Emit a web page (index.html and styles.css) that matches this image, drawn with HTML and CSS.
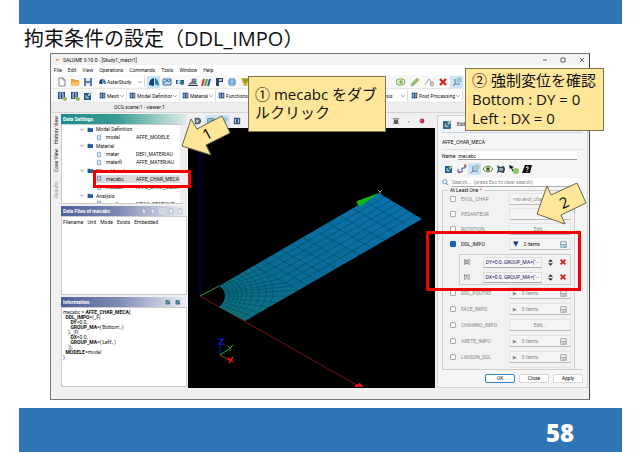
FILE: index.html
```html
<!DOCTYPE html>
<html lang="ja">
<head>
    <meta charset="UTF-8">
    <meta name="viewport" content="width=device-width, initial-scale=1">
    <title>拘束条件の設定（DDL_IMPO）</title>
    <link rel="stylesheet" href="styles.css">
</head>
<body>
    <!-- shared icons -->
    <svg class="defs" width="0" height="0" aria-hidden="true">
        <symbol id="i-new" viewBox="0 0 10 10"><path d="M2 1h4l2 2v6H2z" fill="#fff" stroke="#789"/><path d="M6 1v2h2" fill="none" stroke="#789"/></symbol>
        <symbol id="i-open" viewBox="0 0 10 10"><path d="M1 8V2h3l1 1h4v5z" fill="#e8a33d"/><path d="M1 9l1-4h8l-1 4z" fill="#f4c566"/></symbol>
        <symbol id="i-save" viewBox="0 0 10 10"><path d="M1 1h8v8H1z" fill="#587ca5"/><path d="M3 1h4v3H3zM3 6h4v3H3z" fill="#e4edf5"/></symbol>
        <symbol id="i-aster" viewBox="0 0 10 10"><path d="M0 8Q0 2 5 1v8z" fill="#123f75"/><path d="M6 1q4 2 4 8L6 7z" fill="#2879b8"/></symbol>
        <symbol id="i-geom" viewBox="0 0 10 10"><path d="M1 2h8v6H1z" fill="#c7dcea" stroke="#37739a"/><path d="M2 6l3-3 1 2 3-2" stroke="#1a6c94" fill="none"/></symbol>
        <symbol id="i-cam" viewBox="0 0 10 10"><path d="M1 3h8v4H1z" fill="#245a83"/><circle cx="4" cy="5" r="2" fill="#bdd6e4"/><circle cx="7" cy="6" r="2" fill="#3d7295"/></symbol>
        <symbol id="i-mesh" viewBox="0 0 10 10"><path d="M1 7l2-2h4l2 2zM4 2h4v3H4z" fill="#8698a6" stroke="#4a5967" stroke-width=".6"/><path d="M0 8.500h10" stroke="#27353f"/></symbol>
        <symbol id="i-para" viewBox="0 0 10 10"><path d="M1 9l2-7" stroke="#d5372f" stroke-width="2"/><path d="M4 9l2-7" stroke="#49a447" stroke-width="2"/><path d="M7 9l2-7" stroke="#3054a5" stroke-width="2"/></symbol>
        <symbol id="i-flag" viewBox="0 0 10 10"><path d="M1 1h8v4H5v4H2V1z" fill="#34465b"/><path d="M5 2h3v2H5z" fill="#b9c4d0"/></symbol>
        <symbol id="i-globe" viewBox="0 0 10 10"><circle cx="5" cy="5" r="4" fill="#4b94d1"/><path d="M5 1v8M1 5h8M2 3h6M2 7h6" stroke="#dcedf8" stroke-width=".6"/></symbol>
        <symbol id="i-yacs" viewBox="0 0 10 10"><path d="M1 1h8L7 9H4z" fill="#d5b830"/><path d="M3 3h5M4 5h3" stroke="#5f752f"/></symbol>
        <symbol id="i-cmd" viewBox="0 0 10 10"><path d="M1 1h8v8H1z" fill="#244f86"/><path d="M4 3H3v4h1M6 3h1v4H6" stroke="#fff" fill="none"/></symbol>
        <symbol id="i-cmdplus" viewBox="0 0 10 10"><path d="M1 1h7v7H1z" fill="#244f86"/><path d="M4 2H3v5h1M5 2h1v5H5" stroke="#fff" fill="none" stroke-width=".8"/><circle cx="8" cy="8" r="2" fill="#91bc55"/></symbol>
        <symbol id="i-edit" viewBox="0 0 10 10"><path d="M1 2h7v7H1z" fill="#225b8e"/><path d="M3 4v3h3M5 4l3-3 1 1-3 3z" stroke="#cfe0ed" stroke-width=".7" fill="#8ab65d"/></symbol>
        <symbol id="i-eye" viewBox="0 0 10 10"><path d="M0 5q5-6 10 0-5 6-10 0z" fill="#fff" stroke="#5a783d"/><circle cx="5" cy="5" r="2" fill="#66903b"/><circle cx="5" cy="5" r="1" fill="#243414"/></symbol>
        <symbol id="i-axes" viewBox="0 0 10 10"><path d="M3 2v5h5" fill="none" stroke="#347fb0"/><path d="M3 7L1 9" stroke="#d33"/><circle cx="7" cy="3" r="2" fill="#b9d3d9" stroke="#698" stroke-width=".6"/></symbol>
        <symbol id="i-pt" viewBox="0 0 10 10"><path d="M1 5v3h4M5 8V4h3V1" fill="none" stroke="#284f81"/><path d="M1 8l2 1M7 1h2v2" stroke="#d33" fill="none"/></symbol>
        <symbol id="i-grp" viewBox="0 0 10 10"><path d="M1 1l3 2 4-1 1 3-1 4-5-1-2 1 1-4z" fill="#2d4557"/><path d="M3 4h4v3H3z" fill="#8fa6b5"/></symbol>
        <symbol id="i-pick" viewBox="0 0 10 10"><path d="M0 1l5 2-2 1 2 3-1 1-2-4-1 1z" fill="#111"/><circle cx="7" cy="7" r="3" fill="#8cc860"/></symbol>
        <symbol id="i-help" viewBox="0 0 10 10"><path d="M3 1h7L8 9H0z" fill="#111"/><path d="M4 4q1-2 2-1t-1 3M5 7v1" stroke="#fff" fill="none"/></symbol>
        <symbol id="i-plus" viewBox="0 0 10 10"><rect x="0" y="2" width="9" height="6" rx="3" fill="#dcebc8" stroke="#83ad55"/><path d="M5 3v4M3 5h4" stroke="#739b46"/></symbol>
        <symbol id="i-pen" viewBox="0 0 10 10"><path d="M1 9l1-3 5-5 2 2-5 5z" fill="#9bc075" stroke="#779b55" stroke-width=".6"/></symbol>
        <symbol id="i-link" viewBox="0 0 10 10"><path d="M1 8l4-6 3 4" fill="none" stroke="#999"/><circle cx="8" cy="7" r="2" fill="#ccc" stroke="#888" stroke-width=".6"/></symbol>
        <symbol id="i-x" viewBox="0 0 10 10"><path d="M2 2l6 6M8 2L2 8" stroke="#df2020" stroke-width="2.4"/></symbol>
        <symbol id="i-folder" viewBox="0 0 10 10"><path d="M1 8V2h3l1 1h5v6H1z" fill="#245c9a"/></symbol>
        <symbol id="i-brace" viewBox="0 0 10 10"><path d="M4 1H3v3L2 5l1 1v3h1M6 1h1v3l1 1-1 1v3H6" fill="none" stroke="#2864a4" stroke-width="1.3"/></symbol>
        <symbol id="i-down" viewBox="0 0 10 10"><path d="M1 3l4 4 4-4" fill="none" stroke="#555" stroke-width="1.6"/></symbol>
        <symbol id="i-disk" viewBox="0 0 10 10"><path d="M1 1h8v8H1zM1 5h8M3 7h4v2" fill="none" stroke="currentColor"/></symbol>
        <symbol id="i-bug" viewBox="0 0 10 10"><circle cx="5" cy="6" r="3" fill="#556"/><path d="M1 2l8 7M9 2L1 9M2 2h6" stroke="#665" /></symbol>
        <symbol id="i-view" viewBox="0 0 10 10"><path d="M1 1h5q3 1 3 4T6 9H1z" fill="#555d67"/><path d="M3 3h2q2 2 0 4H3z" fill="#dde"/></symbol>
    </svg>

    <div class="slide">
        <div class="top-bar"></div>
        <h1>拘束条件の設定（DDL_IMPO）</h1>

        <div class="stage">
            <div class="window">
                <div class="titlebar">
                    <svg class="ic" viewBox="0 0 10 10"><path d="M1 3l4 2 4-2-3 5-1-2-2 2z" fill="#c88b60"/></svg>
                    <span>SALOME 9.10.0 - [Study1_mesh1]</span>
                    <span class="win-buttons">
                        <svg viewBox="0 0 50 10"><path d="M4 5h4M22 3h4v4h-4zM41 3l4 4M45 3l-4 4" fill="none" stroke="#444" stroke-width=".8"/></svg>
                    </span>
                </div>
                <div class="menubar">
                    <span>File</span><span>Edit</span><span>View</span><span>Operations</span><span>Commands</span><span>Tools</span><span>Window</span><span>Help</span>
                </div>

                <div class="toolbar">
                    <button class="tool" aria-label="New"><svg><use href="#i-new"/></svg></button>
                    <button class="tool" aria-label="Open"><svg><use href="#i-open"/></svg></button>
                    <button class="tool" aria-label="Save"><svg><use href="#i-save"/></svg></button>
                    <span class="combo module"><svg><use href="#i-aster"/></svg><select aria-label="Module"><option>AsterStudy</option></select><svg class="chev"><use href="#i-down"/></svg></span>
                    <button class="tool on" aria-label="AsterStudy"><svg><use href="#i-aster"/></svg></button>
                    <button class="tool" aria-label="Geometry"><svg><use href="#i-geom"/></svg></button>
                    <button class="tool" aria-label="Fields"><svg><use href="#i-cam"/></svg></button>
                    <button class="tool" aria-label="Mesh"><svg><use href="#i-mesh"/></svg></button>
                    <button class="tool" aria-label="ParaViS"><svg><use href="#i-para"/></svg></button>
                    <button class="tool" aria-label="Jobs"><svg><use href="#i-flag"/></svg></button>
                    <button class="tool" aria-label="Shaper"><svg><use href="#i-globe"/></svg></button>
                    <button class="tool" aria-label="YACS"><svg><use href="#i-yacs"/></svg></button>
                    <div class="tools-right">
                        <button class="tool" aria-label="Add"><svg><use href="#i-plus"/></svg></button>
                        <button class="tool" aria-label="Edit"><svg><use href="#i-pen"/></svg></button>
                        <button class="tool" aria-label="Link"><svg><use href="#i-link"/></svg></button>
                        <button class="tool" aria-label="Delete"><svg><use href="#i-x"/></svg></button>
                        <button class="tool on" aria-label="Axes"><svg><use href="#i-axes"/></svg></button>
                    </div>
                </div>

                <div class="toolbar commands">
                    <button class="tool" aria-label="Add stage"><svg><use href="#i-cmdplus"/></svg></button>
                    <button class="tool" aria-label="Import stage"><svg><use href="#i-cmdplus"/></svg></button>
                    <button class="tool" aria-label="Edit stage"><svg><use href="#i-edit"/></svg></button>
                    <span class="combo w-mesh"><svg><use href="#i-cmd"/></svg><select aria-label="Mesh"><option>Mesh</option></select><svg class="chev"><use href="#i-down"/></svg></span>
                    <span class="combo w-model"><svg><use href="#i-cmd"/></svg><select aria-label="Model Definition"><option>Model Definition</option></select><svg class="chev"><use href="#i-down"/></svg></span>
                    <span class="combo w-mat"><svg><use href="#i-cmd"/></svg><select aria-label="Material"><option>Material</option></select><svg class="chev"><use href="#i-down"/></svg></span>
                    <span class="combo w-mat"><svg><use href="#i-cmd"/></svg><select aria-label="Functions"><option>Functions</option></select></span>
                    <div class="tools-right">
                        <span class="combo w-mat"><select aria-label="Analysis"><option>Analysis</option></select><svg class="chev"><use href="#i-down"/></svg></span>
                        <span class="combo w-post"><svg><use href="#i-cmd"/></svg><select aria-label="Post Processing"><option>Post Processing</option></select><svg class="chev"><use href="#i-down"/></svg></span>
                    </div>
                </div>

                <div class="doc-tabs"><span>OCG scene:1 - viewer:1</span></div>

                <div class="main">
                    <div class="side-tabs"><span>History View</span><span>Case View</span><span class="off">Results</span></div>

                    <div class="left">
                        <section class="panel">
                            <h2 class="green">Data Settings</h2>
                            <div class="tree">
                                <ul>
                                    <li class="folder"><svg><use href="#i-down"/></svg><svg><use href="#i-folder"/></svg>Model Definition</li>
                                    <li><svg><use href="#i-brace"/></svg><span>model</span>AFFE_MODELE</li>
                                    <li class="folder"><svg><use href="#i-down"/></svg><svg><use href="#i-folder"/></svg>Material</li>
                                    <li><svg><use href="#i-brace"/></svg><span>mater</span>DEFI_MATERIAU</li>
                                    <li><svg><use href="#i-brace"/></svg><span>materfl</span>AFFE_MATERIAU</li>
                                    <li class="folder"><svg><use href="#i-down"/></svg><svg><use href="#i-folder"/></svg>BC and Load</li>
                                    <li class="selected"><svg><use href="#i-brace"/></svg><span>mecabc</span>AFFE_CHAR_MECA</li>
                                    <li><svg><use href="#i-brace"/></svg><span>mecach</span>AFFE_CHAR_MECA</li>
                                    <li class="folder"><svg><use href="#i-down"/></svg><svg><use href="#i-folder"/></svg>Analysis</li>
                                    <li><svg><use href="#i-brace"/></svg><span>result</span>MECA_STATIQUE</li>
                                </ul>
                            </div>
                        </section>
                        <section class="panel">
                            <h2>Data Files of mecabc
                                <span class="head-icons faded"><svg><use href="#i-new"/></svg><svg><use href="#i-new"/></svg><svg><use href="#i-disk"/></svg><svg><use href="#i-new"/></svg><svg><use href="#i-new"/></svg></span>
                            </h2>
                            <div class="files">
                                <table>
                                    <tr><th>Filename</th><th>Unit</th><th>Mode</th><th>Exists</th><th>Embedded</th></tr>
                                </table>
                            </div>
                        </section>
                        <section class="panel">
                            <h2>Information
                                <span class="head-icons wide"><svg><use href="#i-edit"/></svg><svg><use href="#i-edit"/></svg></span>
                            </h2>
<pre class="info"><i>mecabc</i> = <b>AFFE_CHAR_MECA(</b>
  <b>DDL_IMPO</b>=(_F(
      <b>DY</b>=0.0,
      <b>GROUP_MA</b>=('Bottom', )
    ), _F(
      <b>DX</b>=0.0,
      <b>GROUP_MA</b>=('Left', )
    )),
  <b>MODELE</b>=<i>model</i>
)</pre>
                        </section>
                    </div>

                    <div class="viewer">
                        <div class="view-tools">
                            <svg><use href="#i-view"/></svg>
                            <svg class="lit"><use href="#i-geom"/></svg>
                            <svg class="lit"><use href="#i-axes"/></svg>
                            <svg><use href="#i-cmd"/></svg>
                            <div class="view-right">
                                <svg><use href="#i-bug"/></svg>
                                <svg viewBox="0 0 10 10"><circle cx="5" cy="6" r="1" fill="#888"/></svg>
                                <svg viewBox="0 0 10 10"><circle cx="5" cy="5" r="3" fill="#b33048"/><circle cx="4" cy="4" r="1" fill="#e79aa8"/></svg>
                            </div>
                        </div>
                        <svg class="scene" viewBox="0 0 247 259" preserveAspectRatio="xMidYMid meet">
                            <defs>
                                <linearGradient id="plate" x1="0" y1="1" x2="1" y2="0">
                                    <stop offset="0" stop-color="#0c7478"/><stop offset=".35" stop-color="#0a6c96"/><stop offset="1" stop-color="#0870ae"/>
                                </linearGradient>
                                <clipPath id="outline"><path d="M31 158L191 65 234 91 57 193 31 179C39 173 39 162 31 158z"/></clipPath>
                            </defs>
                            <path d="M12 0v168" stroke="#050580"/>
                            <path d="M12 168l160 91" stroke="#9c1414" stroke-width=".8"/>
                            <path d="M12 168l19-10" stroke="#2b9a32"/>
                            <path d="M31 158L191 65 234 91 57 193 31 179C39 173 39 162 31 158z" fill="url(#plate)"/>
                            <g clip-path="url(#outline)">
                                <g transform="matrix(45 25 179 -103 12 168)" class="mesh">
                                    <path d="M.14 .3V1M.28 .3V1M.42 .3V1M.56 .3V1M.7 .3V1M.84 .3V1"/>
                                    <path d="M0 .3H1M0 .35H1M0 .4H1M0 .45H1M0 .51H1M0 .57H1M0 .64H1M0 .71H1M0 .78H1M0 .85H1M0 .92H1"/>
                                    <path d="M0 0L0 .3M0 0L.14 .3M0 0L.28 .3M0 0L.42 .3M0 0L.56 .3M0 0L.7 .3M0 0L.84 .3M0 0L1 .3M0 0L1 .24M0 0L1 .18M0 0L1 .13M0 0L1 .08M0 0L1 .04"/>
                                    <ellipse rx=".47" ry=".12"/><ellipse rx=".53" ry=".135"/><ellipse rx=".59" ry=".15"/><ellipse rx=".65" ry=".17"/><ellipse rx=".72" ry=".19"/><ellipse rx=".8" ry=".215"/><ellipse rx=".9" ry=".24"/><ellipse rx="1" ry=".27"/><ellipse rx="1.1" ry=".3"/>
                                </g>
                            </g>
                            <path d="M191 65l-22 8q-1 4 4 5z" fill="#12b516"/>
                            <path d="M190 62l2 2 2-2M192 64v2" stroke="#7b9b7b" fill="none"/>
                            <path d="M172 255l-5 2v2h9z" fill="#d81818"/>
                            <path d="M32 227v-11" stroke="#1414c8"/><path d="M30 211h5l-4 5h5" stroke="#1414c8" stroke-width="1.4" fill="none"/>
                            <path d="M32 227l9-6" stroke="#2fae3b"/><path d="M40 218l2 2 3-3M42 220v3" stroke="#2fae3b" fill="none"/>
                            <path d="M32 227l9 5" stroke="#c22"/><path d="M40 230l5 4M45 229l-4 6" stroke="#e21a1a" stroke-width="1.6"/>
                        </svg>
                    </div>

                    <div class="right">
                        <div class="edit-head"><svg><use href="#i-edit"/></svg>Edit command</div>
                        <div class="cmd-name">AFFE_CHAR_MECA</div>
                        <div class="name-row"><label for="name">Name</label><input id="name" type="text" value="mecabc"></div>
                        <div class="edit-tools">
                            <button class="tool" aria-label="Edit"><svg><use href="#i-edit"/></svg></button>
                            <button class="tool" aria-label="Points"><svg><use href="#i-pt"/></svg></button>
                            <button class="tool on" aria-label="Axes"><svg><use href="#i-axes"/></svg></button>
                            <button class="tool" aria-label="Show"><svg><use href="#i-eye"/></svg></button>
                            <button class="tool" aria-label="Groups"><svg><use href="#i-grp"/></svg></button>
                            <button class="tool" aria-label="Pick"><svg><use href="#i-pick"/></svg></button>
                            <button class="tool" aria-label="Help"><svg><use href="#i-help"/></svg></button>
                        </div>
                        <div class="search-row">
                            <svg viewBox="0 0 10 10"><circle cx="4" cy="4" r="3" fill="none" stroke="#3182c4"/><path d="M6 6l3 3" stroke="#3182c4" stroke-width="1.4"/></svg>
                            <input type="text" aria-label="Search" placeholder="Search...  (press Esc to clear search)">
                        </div>
                        <div class="group-wrap">
                            <fieldset class="group">
                                <legend>At Least One <em>*</em></legend>
                                <div class="rows">
                                    <div class="row"><input type="checkbox" id="k1"><label for="k1">EVOL_CHAR</label><select class="field" aria-label="EVOL_CHAR value"><option>&lt;no evol_char&gt;</option></select></div>
                                    <div class="row"><input type="checkbox" id="k2"><label for="k2">PESANTEUR</label><button class="field edit" aria-label="PESANTEUR value"></button></div>
                                    <div class="row"><input type="checkbox" id="k3"><label for="k3">ROTATION</label><button class="field edit">Edit...</button></div>
                                    <div class="row active"><input type="checkbox" id="k4" checked><label for="k4">DDL_IMPO</label><button class="field"><b>▼</b>2 items<svg><use href="#i-disk"/></svg></button></div>
                                </div>
                                <div class="items">
                                    <div class="item"><span>[0]</span><button>DY=0.0, GROUP_MA=('···</button><svg class="updown" viewBox="0 0 6 10"><path d="M0 4l3-3 3 3zM0 6l3 3 3-3z" fill="#333"/></svg><svg><use href="#i-x"/></svg></div>
                                    <div class="item"><span>[1]</span><button>DX=0.0, GROUP_MA=('···</button><svg class="updown" viewBox="0 0 6 10"><path d="M0 4l3-3 3 3zM0 6l3 3 3-3z" fill="#333"/></svg><svg><use href="#i-x"/></svg></div>
                                </div>
                                <div class="rows loose">
                                    <div class="row"><input type="checkbox" id="k5"><label for="k5">DDL_POUTRE</label><button class="field"><b>▶</b>0 items<svg><use href="#i-disk"/></svg></button></div>
                                    <div class="row"><input type="checkbox" id="k6"><label for="k6">FACE_IMPO</label><button class="field"><b>▶</b>0 items<svg><use href="#i-disk"/></svg></button></div>
                                    <div class="row"><input type="checkbox" id="k7"><label for="k7">CHAMNO_IMPO</label><button class="field edit">Edit...</button></div>
                                    <div class="row"><input type="checkbox" id="k8"><label for="k8">ARETE_IMPO</label><button class="field"><b>▶</b>0 items<svg><use href="#i-disk"/></svg></button></div>
                                    <div class="row"><input type="checkbox" id="k9"><label for="k9">LIAISON_DDL</label><button class="field"><b>▶</b>0 items<svg><use href="#i-disk"/></svg></button></div>
                                    <div class="row"><input type="checkbox" id="k10"><label for="k10">LIAISON_OBLIQUE</label><button class="field"><b>▶</b>0 items<svg><use href="#i-disk"/></svg></button></div>
                                </div>
                            </fieldset>
                        </div>
                        <div class="dialog-buttons"><button class="ok">OK</button><button>Close</button><button>Apply</button></div>
                    </div>
                </div>
                <div class="statusbar"></div>
            </div>

            <!-- annotations over the window -->
            <div class="mark mark-tree"></div>
            <div class="mark mark-ddl"></div>
            <svg class="arrow arrow-1" viewBox="0 0 52 46"><path d="M2 34L11 7l6 10L42 4l8 17-24 12 5 10z"/><text x="23" y="27" transform="rotate(-28 28 22)">1</text></svg>
            <svg class="arrow arrow-2" viewBox="0 0 54 46"><path d="M2 32L12 4l4 9L42 1l9 20-25 12 4 9z"/><text x="25" y="26" transform="rotate(-25 29 21)">2</text></svg>
            <div class="note note-1">① mecabc をダブルクリック</div>
            <div class="note note-2">② 強制変位を確認<br>Bottom : DY = 0<br>Left : DX = 0</div>
        </div>

        <div class="footer">58</div>
    </div>
</body>
</html>
```
FILE: styles.css
```css
* {
    box-sizing: border-box;
}
body {
    margin: 0;
    background: #fff;
    font-family: "Open Sans", "Noto Sans CJK JP", sans-serif;
    color: #111;
}
button, input, select {
    font: inherit;
    color: inherit;
    margin: 0;
    padding: 0;
    border: 0;
    background: none;
    min-width: 0;
}
svg {
    display: block;
    flex: none;
}
.defs {
    position: absolute;
}

/* slide */
.slide {
    margin: 0 18px 0 19px;
}
.top-bar {
    height: 24px;
    background: #2e75b6;
}
h1 {
    margin: 0 5px;
    font-size: 20px;
    font-weight: 400;
    line-height: 29px;
    white-space: nowrap;
}
.stage {
    position: relative;
    margin: 0 32px 8px 31px;
}
.footer {
    height: 45px;
    padding: 4px 48px 0 0;
    background: #2e75b6;
    color: #fff;
    font: 800 24px/41px "Open Sans", sans-serif;
    text-align: right;
}

/* application window */
.window {
    border: 1px solid #777;
    border-right-color: #444;
    background: #f0f0f0;
    font-family: Roboto, "Liberation Sans", sans-serif;
    font-size: 5px;
    line-height: 6px;
    white-space: nowrap;
}
.titlebar {
    display: flex;
    align-items: center;
    gap: 3px;
    height: 11px;
    padding-left: 4px;
    background: #f3f3f3;
}
.titlebar .ic {
    width: 5px;
    height: 5px;
}
.win-buttons {
    margin-left: auto;
}
.win-buttons svg {
    width: 50px;
    height: 10px;
}
.menubar {
    display: flex;
    align-items: center;
    gap: 6px;
    height: 10px;
    padding-left: 3px;
    background: #fff;
}
.toolbar {
    display: flex;
    align-items: center;
    height: 14px;
    padding-left: 4px;
    background: #f8f8f8;
    border-bottom: 1px solid #e6e6e6;
}
.tool {
    display: grid;
    place-items: center;
    width: 13px;
    height: 12px;
}
.tool svg {
    width: 10px;
    height: 10px;
}
.tool.on {
    background: #cce4f7;
}
.tools-right {
    display: flex;
    gap: 1px;
    margin-left: auto;
    margin-right: 126px;
}
.combo {
    display: flex;
    align-items: center;
    gap: 1px;
    height: 11px;
    padding: 0 2px;
    background: #fff;
    border-right: 1px solid #ddd;
}
.combo svg {
    width: 7px;
    height: 7px;
}
.combo select {
    flex: 1;
    height: 9px;
    appearance: none;
}
.combo .chev {
    width: 4px;
    height: 4px;
}
.module {
    width: 48px;
    margin: 0 2px 0 3px;
}
.w-mesh {
    width: 30px;
    margin-left: 3px;
}
.w-model {
    width: 53px;
}
.w-mat {
    width: 36px;
}
.w-post {
    width: 54px;
}
.doc-tabs {
    height: 10px;
    padding-left: 63px;
    line-height: 9px;
    background: #eee;
    border-bottom: 1px solid #d4d4d4;
}
.main {
    display: flex;
}

/* left docks */
.side-tabs {
    width: 10px;
    display: flex;
    flex-direction: column;
    gap: 2px;
    padding: 3px 2px;
}
.side-tabs span {
    writing-mode: vertical-rl;
    transform: rotate(180deg);
    min-height: 28px;
    text-align: center;
}
.side-tabs .off {
    color: #999;
}
.left {
    display: flex;
    flex-direction: column;
    gap: 2px;
    width: 126px;
    margin-right: 1px;
    padding-top: 1px;
}
.panel h2 {
    display: flex;
    align-items: center;
    height: 10px;
    margin: 0;
    padding: 0 2px;
    font-size: 5px;
    color: #fff;
    background: linear-gradient(90deg, #4d5f99, #7c8bb5 45%, #eef0f4);
}
.panel h2.green {
    background: linear-gradient(90deg, #1b8c8c, #3c9c94 45%, #dcece8);
}
.head-icons {
    display: flex;
    gap: 3px;
    margin-left: auto;
    padding-right: 2px;
}
.head-icons.wide {
    gap: 4px;
    padding-right: 4px;
}
.head-icons.faded {
    opacity: .6;
}
.head-icons svg {
    width: 6px;
    height: 6px;
}
.tree {
    height: 80px;
    overflow: hidden;
    background: #fff;
    border: 1px solid #ccc;
    border-right: 7px solid #eee;
}
.tree ul {
    display: grid;
    grid-auto-rows: 1fr;
    height: 83px;
    margin: 0;
    padding: 0;
    list-style: none;
}
.tree li {
    display: flex;
    align-items: center;
    gap: 4px;
    margin-left: 32px;
    padding-left: 2px;
}
.tree li.folder {
    margin-left: 16px;
    gap: 3px;
}
.tree li span {
    width: 26px;
}
.tree li.selected {
    background: #dcdcdc;
}
.tree svg {
    width: 6px;
    height: 7px;
}
.tree .folder svg:first-child {
    width: 4px;
}
.files {
    height: 79px;
    background: #fff;
    border: 1px solid #ccc;
}
.files table {
    border-spacing: 0;
}
.files th {
    padding: 2px 3px 0 1px;
    font-weight: 400;
}
.info {
    height: 80px;
    margin: 0;
    padding: 2px 1px;
    font-family: Roboto, "Liberation Sans", sans-serif;
    line-height: 5px;
    background: #fff;
    border: 1px solid #ccc;
}

/* 3D view */
.viewer {
    flex: 1;
    display: flex;
    flex-direction: column;
    min-width: 0;
    background: #000;
}
.view-tools {
    display: flex;
    align-items: center;
    gap: 5px;
    height: 15px;
    padding: 0 6px;
    background: #f0f0f0;
}
.view-tools svg {
    width: 8px;
    height: 8px;
}
.view-tools .lit {
    background: #cce4f7;
    outline: 2px solid #cce4f7;
}
.view-right {
    display: flex;
    gap: 5px;
    margin-left: auto;
    padding-right: 3px;
}
.scene {
    width: 100%;
    height: 259px;
}
.mesh path, .mesh ellipse {
    fill: none;
    stroke: #064a5c;
    stroke-width: .6px;
    vector-effect: non-scaling-stroke;
}

/* command editor */
.right {
    width: 151px;
    margin: 2px 1px 0 2px;
    padding: 0 4px;
    background: #f5f5f5;
    border: 1px solid #d0d0d0;
}
.edit-head {
    display: flex;
    align-items: center;
    gap: 4px;
    height: 17px;
    border-bottom: 1px solid #c8d4e0;
}
.edit-head svg {
    width: 11px;
    height: 11px;
}
.cmd-name {
    height: 17px;
    line-height: 19px;
    border-bottom: 1px solid #e0e0e0;
}
.name-row {
    display: flex;
    align-items: center;
    gap: 3px;
    height: 12px;
    margin-right: 6px;
    line-height: 12px;
}
.name-row input {
    flex: 1;
    height: 8px;
    background: #fff;
    border-bottom: 1px solid #999;
}
.edit-tools {
    display: flex;
    height: 14px;
    padding-top: 1px;
}
.search-row {
    display: flex;
    align-items: center;
    gap: 3px;
    height: 12px;
    margin-right: 6px;
}
.search-row svg {
    width: 7px;
    height: 7px;
}
.search-row input {
    flex: 1;
    height: 9px;
    background: #fff;
    border-bottom: 1px solid #aaa;
}
.search-row input::placeholder {
    color: #888;
    opacity: 1;
}
.group-wrap {
    height: 182px;
    overflow: hidden;
    border-bottom: 1px solid #ccc;
}
.group {
    margin: 0 8px 0 0;
    padding: 0 3px 0 7px;
    border: 1px solid #ccc;
    background: #f2f2f2;
}
.group legend {
    margin-left: -2px;
    padding: 0 2px;
    height: 5px;
    line-height: 5px;
}
.group em {
    color: #d22;
}
.rows {
    display: grid;
    gap: 3px;
}
.rows.loose {
    gap: 4px;
}
.row {
    display: flex;
    align-items: center;
    height: 12px;
    color: #888;
}
.row.active {
    color: #111;
}
.row input {
    width: 6px;
    height: 6px;
    margin-right: 5px;
    appearance: none;
    background: #fff;
    border: 1px solid #aaa;
    border-radius: 1px;
}
.row input:checked {
    background: #1464b4;
    border-color: #1464b4;
}
.field {
    display: flex;
    align-items: center;
    gap: 5px;
    width: 62px;
    height: 12px;
    margin-left: auto;
    padding: 0 3px;
    background: #f4f4f4;
    border: 1px solid #e4e4e4;
    border-bottom-color: #bbb;
    appearance: none;
}
.field.edit {
    justify-content: center;
}
.field b {
    font-size: 5px;
    font-family: "DejaVu Sans", sans-serif;
    font-weight: 400;
}
.field svg {
    width: 7px;
    height: 7px;
    margin-left: auto;
}
.active .field b {
    color: #123f75;
    font-size: 7px;
}
.active .field svg {
    color: #4684aa;
}
.items {
    display: grid;
    gap: 3px;
    margin: 4px 0 2px 9px;
    padding: 1px 3px 1px 4px;
    border: 1px solid #ccc;
}
.item {
    display: flex;
    align-items: center;
    gap: 6px;
    height: 12px;
}
.item span {
    width: 13px;
}
.item button {
    flex: 1;
    height: 11px;
    color: #1a1a60;
    background: #f6f6f6;
    border: 1px solid #ddd;
    border-bottom-color: #aaa;
}
.item svg {
    width: 8px;
    height: 8px;
}
.item .updown {
    width: 5px;
    height: 9px;
}
.dialog-buttons {
    display: flex;
    justify-content: flex-end;
    gap: 4px;
    padding: 4px 0;
}
.dialog-buttons button {
    width: 30px;
    height: 9px;
    background: #fff;
    border: 1px solid #d4d4d4;
    border-radius: 2px;
    line-height: 7px;
}
.dialog-buttons .ok {
    border-color: #3182c4;
}
.statusbar {
    height: 11px;
    background: #f0f0f0;
}

/* annotations */
.mark, .arrow, .note {
    position: absolute;
}
.mark {
    border: 3px solid #f50000;
}
.mark-tree {
    left: 43px;
    top: 117px;
    width: 98px;
    height: 18px;
}
.mark-ddl {
    right: 9px;
    top: 178px;
    width: 155px;
    height: 60px;
}
.arrow path {
    fill: #ffe699;
    stroke: #6b6650;
}
.arrow text {
    font-size: 15px;
}
.arrow-1 {
    left: 130px;
    top: 59px;
    width: 52px;
    height: 46px;
}
.arrow-2 {
    right: 1px;
    top: 129px;
    width: 54px;
    height: 46px;
}
.note {
    padding: 8px 6px;
    background: #ffe699;
    border: 1px solid #7f7350;
    font-size: 15px;
    line-height: 18px;
}
.note-1 {
    left: 198px;
    top: 23px;
    width: 138px;
    height: 56px;
}
.note-2 {
    right: -14px;
    top: 15px;
    width: 139px;
    height: 63px;
    padding: 2px 6px;
    line-height: 19px;
    white-space: nowrap;
}
```
